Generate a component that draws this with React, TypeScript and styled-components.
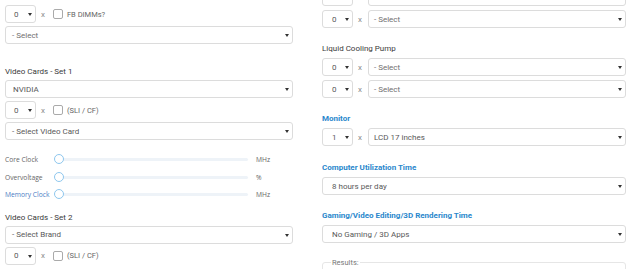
import React from 'react';
import styled, { createGlobalStyle } from 'styled-components';

const GlobalStyle = createGlobalStyle`
  html, body {
    margin: 0;
    padding: 0;
    background: #ffffff;
  }
  body {
    font-family: Roboto, "Liberation Sans", sans-serif;
    color: #555555;
  }
`;

const Page = styled.div`
  width: 640px;
  height: 269px;
  overflow: hidden;
  box-sizing: border-box;
  padding-left: 5px;
  display: grid;
  grid-template-columns: 288px 304px;
  column-gap: 29px;
  align-items: start;
`;

const Column = styled.div<{ $shift: number }>`
  display: flex;
  flex-direction: column;
  margin-top: ${p => p.$shift}px;
`;

const Section = styled.div<{ $top?: number; $gap?: number }>`
  display: flex;
  flex-direction: column;
  gap: ${p => p.$gap ?? 4}px;
  margin-top: ${p => p.$top ?? 0}px;
`;

const Label = styled.div<{ $blue?: boolean }>`
  font-size: 8px;
  line-height: 10px;
  height: 10px;
  font-weight: ${p => (p.$blue ? 700 : 400)};
  color: ${p => (p.$blue ? '#2a87cc' : '#3a3a3a')};
  white-space: nowrap;
`;

const Row = styled.div`
  display: flex;
  align-items: center;
  height: 18px;
  flex: none;
`;

const Box = styled.div<{ $small?: boolean; $grow?: boolean; $muted?: boolean; $pad?: number }>`
  position: relative;
  box-sizing: border-box;
  height: 18px;
  flex: ${p => (p.$grow ? '1 1 0' : 'none')};
  width: ${p => (p.$small ? '31px' : 'auto')};
  border: 1px solid #dcdcdc;
  border-radius: 3px;
  background: #fff;
  display: flex;
  align-items: center;
  padding-left: ${p => p.$pad ?? 7}px;
  font-size: 8px;
  color: ${p => (p.$muted ? '#707070' : '#595959')};
  white-space: nowrap;
`;

const Caret = styled.span`
  position: absolute;
  right: 3px;
  top: 50%;
  margin-top: -1px;
  width: 0;
  height: 0;
  border-left: 2px solid transparent;
  border-right: 2px solid transparent;
  border-top: 3px solid #333;
`;

const Times = styled.span`
  font-size: 8px;
  color: #8a8a8a;
  margin: 0 6px 0 5px;
`;

const Check = styled.span`
  box-sizing: border-box;
  width: 10px;
  height: 10px;
  border: 1px solid #aaaaaa;
  border-radius: 2px;
  background: #fff;
  margin: 0 4px 0 2px;
`;

const CheckText = styled.span`
  font-size: 7.5px;
  color: #666;
`;

const SliderList = styled.div`
  display: flex;
  flex-direction: column;
  margin-top: 11px;
`;

const SliderRow = styled.div`
  display: grid;
  grid-template-columns: 49px 194px 1fr;
  align-items: center;
  height: 17.5px;
  font-family: "Open Sans", "Liberation Sans", sans-serif;
  font-size: 6.7px;
`;

const SliderName = styled.span<{ $link?: boolean }>`
  color: ${p => (p.$link ? '#4a7cc4' : '#666')};
  white-space: nowrap;
`;

const Track = styled.div`
  position: relative;
  height: 3px;
  margin-left: 5px;
  background: #eef3f8;
  border-radius: 2px;
`;

const Handle = styled.span`
  position: absolute;
  left: -5px;
  top: -4px;
  box-sizing: border-box;
  width: 10px;
  height: 10px;
  border-radius: 50%;
  border: 1.5px solid #8ec7ee;
  background: #fff;
`;

const Unit = styled.span`
  color: #666;
  padding-left: 8px;
`;

const Fieldset = styled.fieldset`
  margin: 15px 0 0 0;
  padding: 0 8px 20px;
  border: 1px solid #e6e6e6;
  border-radius: 3px;
`;

const Legend = styled.legend`
  font-size: 7.5px;
  color: #777;
  padding: 0 1px;
`;

const Select: React.FC<{ text: string; small?: boolean; grow?: boolean; muted?: boolean; pad?: number }> = ({
  text,
  small,
  grow,
  muted,
  pad,
}) => (
  <Box $small={small} $grow={grow} $muted={muted} $pad={pad}>
    {text}
    <Caret />
  </Box>
);

const QtyRow: React.FC<{ qty: string; text: string; muted?: boolean }> = ({ qty, text, muted }) => (
  <Row>
    <Select small text={qty} pad={9} />
    <Times>x</Times>
    <Select grow text={text} muted={muted} pad={5} />
  </Row>
);

const CheckRow: React.FC<{ text: string }> = ({ text }) => (
  <Row>
    <Select small text="0" pad={8} />
    <Times>x</Times>
    <Check />
    <CheckText>{text}</CheckText>
  </Row>
);

const sliders = [
  { name: 'Core Clock', unit: 'MHz' },
  { name: 'Overvoltage', unit: '%' },
  { name: 'Memory Clock', unit: 'MHz', link: true },
];

const App: React.FC = () => {
  return (
    <>
      <GlobalStyle />
      <Page>
        <Column $shift={5}>
          <Section $gap={3}>
            <CheckRow text="FB DIMMs?" />
            <Select text="- Select" muted pad={6} />
          </Section>

          <Section $top={23} $gap={3}>
            <Label>Video Cards - Set 1</Label>
            <Select text="NVIDIA" />
            <CheckRow text="(SLI / CF)" />
            <Select text="- Select Video Card" pad={6} />
          </Section>

          <SliderList>
            {sliders.map(s => (
              <SliderRow key={s.name}>
                <SliderName $link={s.link}>{s.name}</SliderName>
                <Track>
                  <Handle />
                </Track>
                <Unit>{s.unit}</Unit>
              </SliderRow>
            ))}
          </SliderList>

          <Section $top={9} $gap={3}>
            <Label>Video Cards - Set 2</Label>
            <Select text="- Select Brand" pad={6} />
            <CheckRow text="(SLI / CF)" />
          </Section>
        </Column>

        <Column $shift={-12}>
          <Section>
            <QtyRow qty="0" text="- Select" muted />
            <QtyRow qty="0" text="- Select" muted />
          </Section>

          <Section $top={16}>
            <Label>Liquid Cooling Pump</Label>
            <QtyRow qty="0" text="- Select" muted />
            <QtyRow qty="0" text="- Select" muted />
          </Section>

          <Section $top={16}>
            <Label $blue>Monitor</Label>
            <QtyRow qty="1" text="LCD 17 inches" />
          </Section>

          <Section $top={17}>
            <Label $blue>Computer Utilization Time</Label>
            <Select text="8 hours per day" pad={9} />
          </Section>

          <Section $top={16}>
            <Label $blue>Gaming/Video Editing/3D Rendering Time</Label>
            <Select text="No Gaming / 3D Apps" pad={9} />
          </Section>

          <Fieldset>
            <Legend>Results:</Legend>
          </Fieldset>
        </Column>
      </Page>
    </>
  );
};

export default App;
